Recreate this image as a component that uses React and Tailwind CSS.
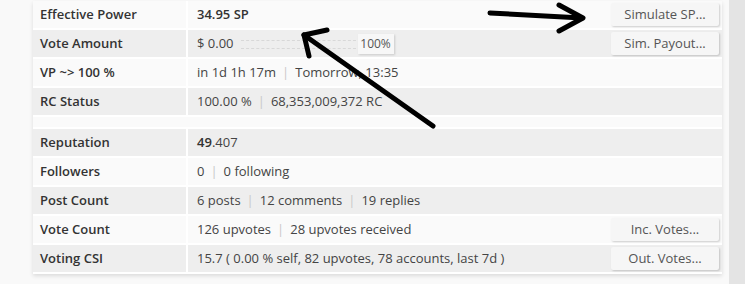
import React from 'react';

const Sep = () => <span className="mx-[6px] text-[#c8c8c8]">|</span>;

const Btn = ({ children }) => (
    <button className="h-[23px] w-[108px] bg-[#f6f6f6] text-[#555] text-[13px] rounded-[2px] shadow-[1px_1px_2px_rgba(0,0,0,0.18)]">
        {children}
    </button>
);

const Row = ({ label, gray, children, action }) => (
    <div className={`flex h-[27px] mb-[2px] ${gray ? 'bg-[#eeeeee]' : 'bg-[#fafafa]'}`}>
        <div className="w-[153px] pl-[7px] pt-[1px] flex items-center font-semibold text-[#333]">{label}</div>
        <div className="w-[2px] bg-white" />
        <div className="flex-1 flex items-center pl-[9px] pr-[3px] text-[#444]">
            <div className="flex-1 flex items-center pt-[1px]">{children}</div>
            {action}
        </div>
    </div>
);

const App = () => {
    return (
        <div className="relative w-[745px] h-[284px] bg-[#f9f9f9] overflow-hidden" style={{ fontFamily: '"Open Sans", sans-serif' }}>
            <div className="flex h-full">
                <div className="w-[33px]" />
                <div className="w-[689px] self-start mt-[1px] bg-white shadow-[0_2px_4px_rgba(0,0,0,0.12)] text-[13px]">
                    <Row label="Effective Power" action={<Btn>Simulate SP...</Btn>}>
                        <span className="font-semibold text-[#333]">34.95 SP</span>
                    </Row>
                    <Row label="Vote Amount" gray action={<Btn>Sim. Payout...</Btn>}>
                        <span>$ 0.00</span>
                        <div className="ml-[7px] w-[115px] h-[9px] border-y border-dashed border-[#d8d8d8]" />
                        <span className="ml-[2px] w-[36px] justify-center h-[20px] flex items-center bg-[#f7f7f7] text-[12px] text-[#555] shadow-[1px_1px_2px_rgba(0,0,0,0.15)]">100%</span>
                    </Row>
                    <Row label="VP ~> 100 %">
                        <span>in 1d 1h 17m</span><Sep /><span>Tomorrow, 13:35</span>
                    </Row>
                    <Row label="RC Status" gray>
                        <span>100.00 %</span><Sep /><span>68,353,009,372 RC</span>
                    </Row>
                    <div className="h-[10px] bg-[#fafafa] mb-[2px]" />
                    <Row label="Reputation" gray>
                        <span><span className="font-semibold text-[#333]">49</span>.407</span>
                    </Row>
                    <Row label="Followers">
                        <span>0</span><Sep /><span>0 following</span>
                    </Row>
                    <Row label="Post Count" gray>
                        <span>6 posts</span><Sep /><span>12 comments</span><Sep /><span>19 replies</span>
                    </Row>
                    <Row label="Vote Count" action={<Btn>Inc. Votes...</Btn>}>
                        <span>126 upvotes</span><Sep /><span>28 upvotes received</span>
                    </Row>
                    <Row label="Voting CSI" gray action={<Btn>Out. Votes...</Btn>}>
                        <span>15.7 ( 0.00 % self, 82 upvotes, 78 accounts, last 7d )</span>
                    </Row>
                </div>
                <div className="w-[7px]" />
                <div className="flex-1 bg-[#e4e4e4]" />
            </div>
            <svg className="absolute inset-0 pointer-events-none" width="745" height="284">
                <g stroke="#000" strokeWidth="5" strokeLinecap="round" strokeLinejoin="round" fill="none">
                    <path d="M433 126 L304 35" />
                    <path d="M327 30 L304 35 L309 56" />
                    <path d="M490 13 L582 18" />
                    <path d="M559 5 L583 18 L559 31" />
                </g>
            </svg>
        </div>
    );
};

export default App;
